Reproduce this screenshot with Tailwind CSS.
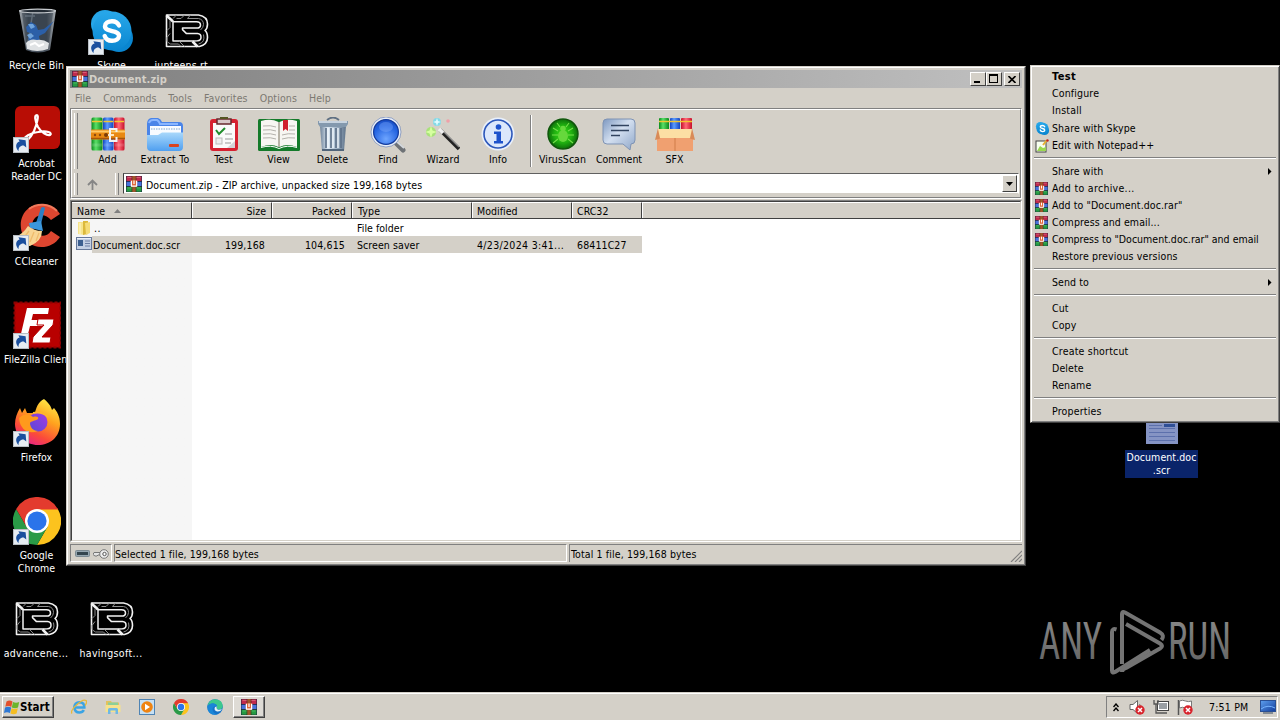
<!DOCTYPE html>
<html lang="en">
<head>
<meta charset="utf-8">
<title>Desktop</title>
<script src="https://cdn.jsdelivr.net/npm/@tailwindcss/browser@4"></script>
</head>
<body class="w-[1280px] h-[720px] overflow-hidden bg-black">
<!-- Shared icon symbols -->
<svg class="absolute size-0" aria-hidden="true">
  <defs>
    <linearGradient id="gGlass" x1="0" x2="1" y1="0" y2="0"><stop offset="0" stop-color="#a2a8ad"/><stop offset=".25" stop-color="#4a5460"/><stop offset=".75" stop-color="#49525d"/><stop offset="1" stop-color="#aab0b5"/></linearGradient>
    <linearGradient id="gSky" x1="0" x2="0" y1="0" y2="1"><stop offset="0" stop-color="#28a8ea"/><stop offset="1" stop-color="#0a86d0"/></linearGradient>
    <linearGradient id="gFolder" x1="0" x2="0" y1="0" y2="1"><stop offset="0" stop-color="#a9d8fb"/><stop offset="1" stop-color="#4f9ff0"/></linearGradient>
    <linearGradient id="gFf" x1=".8" x2=".3" y1="0" y2="1"><stop offset="0" stop-color="#fff04a"/><stop offset=".4" stop-color="#ffa21e"/><stop offset=".75" stop-color="#fb4a3a"/><stop offset="1" stop-color="#e6228a"/></linearGradient>
    <linearGradient id="gFfp" x1="1" x2="0" y1="0" y2="1"><stop offset="0" stop-color="#a43be0"/><stop offset="1" stop-color="#5548d8"/></linearGradient>
    <linearGradient id="gCan" x1="0" x2="1" y1="0" y2="0"><stop offset="0" stop-color="#6d8299"/><stop offset=".3" stop-color="#dfeaf4"/><stop offset=".6" stop-color="#a9bbcd"/><stop offset="1" stop-color="#5f748b"/></linearGradient>
    <radialGradient id="gLens" cx=".5" cy=".75" r=".8"><stop offset="0" stop-color="#6ea5ff"/><stop offset=".6" stop-color="#2363e0"/><stop offset="1" stop-color="#1746b8"/></radialGradient>
    <radialGradient id="gVirus"><stop offset="0" stop-color="#3fe01c"/><stop offset=".6" stop-color="#1fae10"/><stop offset="1" stop-color="#0d6f0a"/></radialGradient>
    <linearGradient id="gBub" x1="0" x2="1" y1="0" y2="1"><stop offset="0" stop-color="#7d98c0"/><stop offset=".45" stop-color="#d3dff0"/><stop offset="1" stop-color="#8ea6c8"/></linearGradient>
    <linearGradient id="gAny" gradientUnits="userSpaceOnUse" x1="0" x2="0" y1="14" y2="55"><stop offset="0" stop-color="#868686"/><stop offset="1" stop-color="#666666"/></linearGradient>
    <linearGradient id="gMon" x1="0" x2="1" y1="0" y2="1"><stop offset="0" stop-color="#5ea0f0"/><stop offset="1" stop-color="#123c9a"/></linearGradient>
    <linearGradient id="gBg" x1="0" x2="1" y1="0" y2="0"><stop offset="0" stop-color="#0a8a1c"/><stop offset=".4" stop-color="#5be068"/><stop offset="1" stop-color="#0a8a1c"/></linearGradient>
    <linearGradient id="gBb" x1="0" x2="1" y1="0" y2="0"><stop offset="0" stop-color="#1445c0"/><stop offset=".4" stop-color="#5c9cff"/><stop offset="1" stop-color="#1445c0"/></linearGradient>
    <linearGradient id="gBr" x1="0" x2="1" y1="0" y2="0"><stop offset="0" stop-color="#c80f2a"/><stop offset=".45" stop-color="#ff6a78"/><stop offset="1" stop-color="#c80f2a"/></linearGradient>

    <symbol id="shortcut" viewBox="0 0 16 16"><rect x=".5" y=".5" width="15" height="15" fill="#e6ecf2" stroke="#b8bec4"/><path d="M5.500 14.200C2.200 10.800 2.300 5.800 6.600 4.600L5.400 2.200 12.600 3.200 13.300 10.600 10.700 8.600C7.600 8.300 5.400 10.600 5.500 14.200Z" fill="#1a4f9e"/></symbol>

    <symbol id="rar" viewBox="0 0 16 16"><rect width="16" height="16" fill="#1c2440"/><rect x=".5" y=".3" width="15" height="4.700" fill="#c02a4c"/><rect x=".5" y="5.800" width="15" height="4.200" fill="#4872dc"/><rect x=".5" y="10.800" width="15" height="4.900" fill="#259a42"/><path d="M1.500 1.500h13" stroke="#e06a80" stroke-width=".8"/><path d="M1.500 12h13" stroke="#52c06a" stroke-width=".8"/><rect x="6.200" y="0" width="3.600" height="16" fill="#a0562a"/><path d="M5.900 0v16M10.100 0v16" stroke="#3d2210" stroke-width=".5"/><rect x="4.800" y="4.300" width="6.400" height="6.400" rx="1" fill="#e0683a"/><path d="M5.400 4.800v5.400h5.200V4.800M8 4.500v3.500" stroke="#fff" stroke-width="1.200" fill="none"/></symbol>

    <symbol id="books" viewBox="0 0 34 34">
      <rect x=".5" y=".5" width="11" height="33" rx="1.5" fill="url(#gBg)"/><rect x="12" y=".5" width="10.500" height="33" rx="1.500" fill="url(#gBb)"/><rect x="23" y=".5" width="10.500" height="33" rx="1.500" fill="url(#gBr)"/>
      <path d="M1 4.500h10M12.500 4.500h9.500M23.500 4.500h9.500" stroke="#f2c530" stroke-width="1.600"/><path d="M1 28h10M12.500 28h9.500M23.500 28h9.500" stroke="#fff" stroke-opacity=".15" stroke-width="3"/>
      <rect x="0" y="12.500" width="34" height="10" rx="1" fill="#e88912"/><path d="M0 14.500h34" stroke="#ffc964" stroke-width="2"/><path d="M0 21.500h34" stroke="#a9560a" stroke-width="1.500"/>
      <circle cx="15" cy="18" r="2" fill="#7a3b08"/><circle cx="4" cy="18" r="1.200" fill="#8a4a10"/><circle cx="9" cy="18" r="1.200" fill="#8a4a10"/><path d="M25.500 15v-3H19v12h6.500v-4" fill="none" stroke="#f3f3f3" stroke-width="2"/><path d="M17 18h6" stroke="#fff0d0" stroke-width="1.800"/>
    </symbol>

    <symbol id="skype" viewBox="0 0 48 48"><circle cx="17" cy="17" r="14" fill="#27a6e8"/><circle cx="31" cy="31" r="14" fill="#0a86d0"/><circle cx="24" cy="24" r="19.500" fill="url(#gSky)"/><path d="M31 18.500C29.500 14.800 26.800 14.200 24 14.200c-4 0-7 2-7 5 0 6.500 14 3.300 14 9.600 0 3-3 5-7 5-3.600 0-6.200-1.600-7.300-4.800" fill="none" stroke="#fff" stroke-width="4.400" stroke-linecap="round"/></symbol>

    <symbol id="chrome" viewBox="0 0 48 48"><path d="M24 24 3.200 12A24 24 0 0 1 44.800 12Z" fill="#e33b2e"/><path d="M24 12H44.800A24 24 0 0 1 24 48l10.400-18Z" fill="#fcc31e"/><path d="M3.200 12A24 24 0 0 0 24 48L34.400 30 24 24 13.600 30Z" fill="#2a9a47"/><path d="M3.200 12 13.600 30 24 12Z" fill="#e33b2e"/><path d="M24 12h21" stroke="#e33b2e" stroke-width="1"/><circle cx="24" cy="24" r="12" fill="#fff"/><circle cx="24" cy="24" r="9.600" fill="#2b74ea"/></symbol>

    <symbol id="blogo" viewBox="0 0 48 48"><g transform="translate(-.5 .5)" fill="none" stroke="#f2f2f2" stroke-linejoin="round"><path d="M4 7.500H36q9 1.500 9 9 0 4.500-2.500 6.500 2.500 2 2.500 7 0 7-8 9H4Z" stroke-width="1.600"/><path d="M4 8 10.500 14M30 34l5 5" stroke-width="2.600"/><path d="M31 33.500H10.500V14.200H34q4 0 4 3.200t-4 3.200H20v1.500l4 4H35q3.500 .3 3.500 3.600t-3.500 3.600Z" stroke-width="1.500"/><path d="M14 7.500 10.500 11M22 7.500l-3.500 3.500H14M28 7.500l-3 3.500h11q5 1 5 6 0 3-3 5.500M7.500 13v7l-3 3M7.500 26l-3 4v4M5 34.500l3 2h8l2.500 2.500M17 34l5 5M41 27q2 8-5 9.500" stroke-width="1" stroke="#8c8c8c"/></g></symbol>

    <symbol id="arrow" viewBox="0 0 4 7"><path d="M0 0v7l3.500-3.500z" fill="#000"/></symbol>
    <symbol id="badx" viewBox="0 0 10 10"><circle cx="5" cy="5" r="4.700" fill="#d8242c"/><path d="m3 3 4 4M7 3 3 7" stroke="#fff" stroke-width="1.500"/></symbol>
  </defs>
</svg>

<div class="relative w-[1280px] h-[720px] flex flex-col font-['DejaVu_Sans_Condensed','DejaVu_Sans',sans-serif] [font-stretch:condensed] text-[10.5px] tracking-[0.04px] leading-[13px] text-black whitespace-nowrap">
  <!-- Desktop surface -->
  <main class="relative h-[692px] w-full overflow-hidden bg-black text-white">

    <div class="absolute left-[-1px] top-[7px] w-[75px] flex flex-col items-center text-center">
      <svg class="size-12" viewBox="0 0 48 48"><path d="M6 3h37l-6 40q-12 5-24 0Z" fill="url(#gGlass)"/><path d="M9 6h31l-5 36q-11 4-21 0Z" fill="#28323f" opacity=".45"/><path d="M20 4l-6 38M12 9l10 0" stroke="#7b8793" stroke-width="1.500" opacity=".6"/><path d="m13 20 5-5 5 3 2 5 6-1 10-8-9 12-6 3 1 6-7-1-3 3-2-6 5-4-6-2Z" fill="#2b5fa8"/><path d="m15 17 5 0 2 3-4 2zM14 28l4-2 3 3-4 3Z" fill="#6fa4dc"/><path d="M13 36q4-5 11-3 6-1 12 3l-1 6q-11 4-21 0Z" fill="#dfe2e4"/><path d="m17 38 5-2 4 3 5-2" stroke="#fff" fill="none" stroke-width="2"/><ellipse cx="24.500" cy="4" rx="18" ry="1.800" fill="#222a33" stroke="#c6cace" stroke-width="1.200"/></svg>
      <span class="mt-[4px]">Recycle Bin</span>
    </div>

    <div class="absolute left-[74px] top-[7px] w-[75px] flex flex-col items-center text-center">
      <div class="relative size-12"><svg class="size-12"><use href="#skype"/></svg><svg class="absolute left-0 bottom-0 size-4"><use href="#shortcut"/></svg></div>
      <span class="mt-[4px]">Skype</span>
    </div>

    <div class="absolute left-[149px] top-[7px] w-[75px] flex flex-col items-center text-center">
      <svg class="size-12"><use href="#blogo"/></svg>
      <span class="mt-[4px] -ml-px tracking-[0.2px]">junteens.rt...</span>
    </div>

    <div class="absolute left-[-1px] top-[105px] w-[75px] flex flex-col items-center text-center">
      <div class="relative size-12"><svg class="size-12" viewBox="0 0 48 48"><rect x="2" y="1" width="45" height="43" rx="6" fill="#b80d05"/><path d="M24 10c-3 0-2 6 1 12 3 5 9 9 12 8 3-2-3-5-12-3-8 1-14 5-14 8 1 3 6-1 10-9 3-7 5-16 3-16Z" fill="none" stroke="#fff" stroke-width="2.200"/></svg><svg class="absolute left-0 bottom-0 size-4"><use href="#shortcut"/></svg></div>
      <span class="mt-[4px]">Acrobat<br>Reader DC</span>
    </div>

    <div class="absolute left-[-1px] top-[203px] w-[75px] flex flex-col items-center text-center">
      <div class="relative size-12"><svg class="size-12" viewBox="0 0 48 48"><path d="M47 11C41 1 26-2 16 5 4 14 6 32 16 40c9 7 24 5 31-6l-9-6c-4 6-11 6-15 2-5-5-5-12 0-16 5-3 11-2 15 3Z" fill="#dd4630"/><path d="M44 8C36 0 24 0 16 6" stroke="#f07a5c" stroke-width="2" fill="none"/><path d="M28 5q2-2 4 0l-4 16-5-1Z" fill="#2b7fc4"/><path d="m16 20 12-2 2 10-13-3Z" fill="#3b97dc"/><path d="M15 23q6 5 14 5 0 10-12 15Q6 44 2 34q8-3 13-11Z" fill="#f8d593"/><path d="m16 28-6 8m11-7-4 10m9-9-3 8" stroke="#eebb6c" stroke-width="1.300"/></svg><svg class="absolute left-0 bottom-0 size-4"><use href="#shortcut"/></svg></div>
      <span class="mt-[4px]">CCleaner</span>
    </div>

    <div class="absolute left-[-1px] top-[301px] w-[75px] flex flex-col items-center text-center">
      <div class="relative size-12"><svg class="size-12" viewBox="0 0 48 48"><rect x="1.500" y="1.500" width="46" height="45" fill="#b80000" stroke="#8d0202" stroke-width="2" stroke-dasharray="3 2"/><path d="M14 7h22l-1 6H20l-1.500 6H31l-1.500 6H17l-3 12H7Z" fill="#fff"/><path d="M25 18h16l-1 6-11 12h9l-1 6H19l1-6 11-12h-7Z" fill="#fff" stroke="#b80000" stroke-width="1"/></svg><svg class="absolute left-0 bottom-0 size-4"><use href="#shortcut"/></svg></div>
      <span class="mt-[4px] ml-[2px]">FileZilla Client</span>
    </div>

    <div class="absolute left-[-1px] top-[399px] w-[75px] flex flex-col items-center text-center">
      <div class="relative size-12"><svg class="size-12" viewBox="0 0 48 48"><path d="M31 0c6 5 7 8 8 11l2-2c5 6 6 11 6 16 0 13-10 21-22 21S2 37 2 25c0-6 2-11 5-16l2 5 3-5 2 5 8 0c1-5 3-11 9-14Z" fill="url(#gFf)"/><circle cx="25" cy="23" r="9.500" fill="url(#gFfp)"/><path d="M6 19c5-5 11-4 14-1 4-1 6 0 5 2-3 2-7 2-8 4 0 5 4 8 8 8-9 4-18-1-19-13Z" fill="#ff9a1c"/><path d="M20 14q9-2 15 4" fill="none" stroke="#ffb52c" stroke-width="2"/></svg><svg class="absolute left-0 bottom-0 size-4"><use href="#shortcut"/></svg></div>
      <span class="mt-[4px]">Firefox</span>
    </div>

    <div class="absolute left-[-1px] top-[497px] w-[75px] flex flex-col items-center text-center">
      <div class="relative size-12"><svg class="size-12"><use href="#chrome"/></svg><svg class="absolute left-0 bottom-0 size-4"><use href="#shortcut"/></svg></div>
      <span class="mt-[4px]">Google<br>Chrome</span>
    </div>

    <div class="absolute left-[-1px] top-[595px] w-[75px] flex flex-col items-center text-center">
      <svg class="size-12"><use href="#blogo"/></svg>
      <span class="mt-[4px] -ml-px tracking-[0.3px]">advancene...</span>
    </div>
    <div class="absolute left-[74px] top-[595px] w-[75px] flex flex-col items-center text-center">
      <svg class="size-12"><use href="#blogo"/></svg>
      <span class="mt-[4px] -ml-px tracking-[0.35px]">havingsoft...</span>
    </div>

    <!-- Selected desktop file -->
    <div class="absolute left-[1125px] top-[408px] w-[73px] flex flex-col items-center text-center">
      <svg class="w-8 h-9" viewBox="0 0 32 36"><rect width="32" height="36" fill="#8594c4"/><rect x="18" y="16" width="11" height="3" fill="#2f4f96"/><path d="M3 17.500h13M3 20.500h26M3 24.500h26M3 28.500h26M3 32.500h26" stroke="#5c70ac"/></svg>
      <span class="mt-[6px] w-full h-7 pt-px bg-[#0a246a] tracking-[0.08px]">Document.doc<br>.scr</span>
    </div>

    <!-- Watermark -->
    <svg class="absolute left-[1036px] top-[606px] w-[200px] h-[70px]" viewBox="0 0 200 70">
      <g fill="url(#gAny)" font-family="Roboto, sans-serif" font-size="52" font-weight="400"><text x="3" y="53" textLength="63" lengthAdjust="spacingAndGlyphs">ANY</text><text x="132" y="53" textLength="63" lengthAdjust="spacingAndGlyphs">RUN</text></g>
      <g fill="none" stroke="#747474" stroke-width="4" stroke-linejoin="round" stroke-linecap="butt"><path d="M80.500 23.500q-4.500-1.500-4.500 2.500v38.500q0 3 3 1.500l35-22"/><path d="M86 58V8q0-3 3-1.500l35 20q5 3 1.500 7.500"/><path d="M90 18l34 19.500q4 2.500 0 5L90 62q-4 1.500-4 4"/></g>
    </svg>

    <!-- Archive window -->
    <section class="absolute left-[66px] top-[66px] w-[960px] h-[500px] flex flex-col bg-[#d4d0c8] text-black border border-t-[#d4d0c8] border-l-[#d4d0c8] border-r-[#404040] border-b-[#404040]">
      <div class="flex flex-col h-full border border-t-white border-l-white border-r-[#808080] border-b-[#808080] p-[2px]">
        <header class="flex items-center h-[18px] shrink-0 pl-[2px] pr-[2px] bg-linear-to-r from-[#808080] to-[#c0c0c0] text-[#d4d0c8] font-bold text-[11px]">
          <svg class="size-4 shrink-0"><use href="#rar"/></svg>
          <span class="ml-[1px] grow tracking-[0.1px]">Document.zip</span>
          <div class="flex">
            <span class="w-4 h-[14px] bg-[#d4d0c8] border border-t-white border-l-white border-r-[#404040] border-b-[#404040] flex items-end pl-[3px] pb-[2px]"><i class="w-[6px] h-[2px] bg-black"></i></span>
            <span class="w-4 h-[14px] bg-[#d4d0c8] border border-t-white border-l-white border-r-[#404040] border-b-[#404040] pl-[2px] pt-px"><i class="block w-[9px] h-[9px] border border-t-2 border-black"></i></span>
            <span class="ml-[2px] w-4 h-[14px] bg-[#d4d0c8] border border-t-white border-l-white border-r-[#404040] border-b-[#404040] flex items-center justify-center"><svg class="w-2 h-[7px]" viewBox="0 0 8 7"><path d="m.5 0 7 7M7.500 0l-7 7" stroke="#000" stroke-width="1.600"/></svg></span>
          </div>
        </header>
        <nav class="flex items-center h-[20px] shrink-0 text-[#7c7972] pl-[5px] pt-px gap-[12px] tracking-[0.12px]">
          <span>File</span><span class="tracking-[-0.05px]">Commands</span><span>Tools</span><span>Favorites</span><span>Options</span><span>Help</span>
        </nav>

        <!-- Toolbars -->
        <div class="h-[91px] shrink-0 border border-t-[#808080] border-l-[#808080] border-r-white border-b-white">
          <div class="h-full border border-t-white border-l-white border-r-[#808080] border-b-[#808080] flex flex-col">
            <div class="flex h-[61px] shrink-0 pl-[2px] pt-px">
              <i class="w-[4px] mr-[2px] my-[2px] border-l border-l-white border-r border-r-[#808080]"></i>
              <div class="w-[55px] flex flex-col items-center pt-[6px]"><svg class="size-[34px] ml-px"><use href="#books"/></svg><span class="mt-[2px]">Add</span></div>
              <div class="w-[60px] flex flex-col items-center pt-[6px]">
                <svg class="w-[38px] h-[34px]" viewBox="0 0 38 34"><path d="M1 7q0-5 4-6h7q3 1 4 4h17q4 0 4 4v20H1Z" fill="#4a84e8"/><path d="M3 6q1-3 4-3h4q2 1 3 4h18" fill="none" stroke="#8ab6ff" stroke-width="2"/><rect x="4" y="9" width="31" height="12" fill="#f8fbff"/><path d="M5 12h29" stroke="#bcd0e8" stroke-width="2" stroke-dasharray="1.500 1"/><path d="M1 18h11l4-2.500h21V30q0 4-4 4H5q-4 0-4-4Z" fill="url(#gFolder)"/><rect x="23" y="27" width="10" height="3" rx="1" fill="#d9431e"/></svg>
                <span class="mt-[2px] tracking-[0.25px]">Extract To</span></div>
              <div class="w-[56px] flex flex-col items-center pt-[6px] pl-px">
                <svg class="w-[30px] h-[34px]" viewBox="0 0 30 34"><rect x="1" y="2" width="28" height="32" rx="3" fill="#d62131"/><rect x="4" y="6" width="22" height="25" fill="#fafafa"/><path d="M26 24v7h-8Z" fill="#d4d4d8"/><path d="M8 2h14v5H8Z" fill="#d8c8c8" stroke="#67282c" stroke-width="1.500"/><path d="M11 1h8" stroke="#552" stroke-width="2"/><path d="m7 13 3 4 6-6" stroke="#1f8c2b" stroke-width="2" fill="none"/><rect x="7" y="21" width="6" height="6" fill="#eee" stroke="#bbb"/><path d="M16 17h7M16 22h8M16 26h6" stroke="#999"/></svg>
                <span class="mt-[2px]">Test</span></div>
              <div class="w-[54px] flex flex-col items-center pt-[6px] pl-px">
                <svg class="w-[42px] h-[34px]" viewBox="0 0 42 34"><rect x="0" y="2" width="42" height="32" rx="1.500" fill="#147a2a"/><path d="M3 4q10-3 17.500 1V30Q13 26 3 30ZM39 4q-10-3-17.500 1V30Q29 26 39 30Z" fill="#f7f6f2"/><path d="M3 30.500q10-3 18 1 8-4 18-1" stroke="#fff" fill="none"/><path d="M20.500 5v25M21.500 5v25" stroke="#b8b4a8"/><path d="M5 9q8-1 13 1M5 13q8-1 13 1M5 17q8-1 13 1M5 21q8-1 13 1M24 18q6-2 13-1M24 22q6-2 13-1M31 9h6M31 13h6" stroke="#b4b2ac" fill="none"/><path d="M25 3h5v11l-2.500-2-2.500 2Z" fill="#d01f2c"/></svg>
                <span class="mt-[2px]">View</span></div>
              <div class="w-[55px] flex flex-col items-center pt-[6px]">
                <svg class="w-[32px] h-[34px] ml-px" viewBox="0 0 32 34"><path d="M10 3q6-5 12 0" fill="none" stroke="#5f7083" stroke-width="1.800"/><path d="M3 9h26l-2 25H5Z" fill="url(#gCan)"/><path d="M9 11v20M14 11v20M19 11v20M24 11v20" stroke="#5d7088" stroke-width="1.600"/><path d="M11 11v20M16 11v20M21 11v20" stroke="#eef5fb" stroke-width="1.400"/><path d="M1 4h30v3l-2 3H3L1 7Z" fill="#8499ae"/><path d="M2 5h28" stroke="#dfe8f0" stroke-width="1.500"/><path d="M5 33h22" stroke="#50647a" stroke-width="2"/></svg>
                <span class="mt-[2px]">Delete</span></div>
              <div class="w-[55px] flex flex-col items-center pt-[6px]">
                <svg class="w-[36px] h-[36px] -mb-[2px]" viewBox="0 0 36 36"><path d="m24 24 9 9" stroke="#6e7276" stroke-width="5" stroke-linecap="round"/><path d="m25 23 9 8" stroke="#d4d8dc" stroke-width="1.800"/><circle cx="16" cy="15" r="13.700" fill="url(#gLens)" stroke="#e9eef6" stroke-width="2.400"/><circle cx="16" cy="15" r="12.400" fill="none" stroke="#123a9c" stroke-width="1.200"/><circle cx="16" cy="15" r="15" fill="none" stroke="#5a76b0" stroke-width=".6"/><ellipse cx="16" cy="10" rx="7" ry="5" fill="#8cb4ff" opacity=".35"/></svg>
                <span class="mt-[2px] ml-px">Find</span></div>
              <div class="w-[55px] flex flex-col items-center pt-[6px]">
                <svg class="w-[34px] h-[34px] ml-px" viewBox="0 0 34 34"><circle cx="5" cy="15" r="5" fill="#9be860" opacity=".75"/><path d="M5 9l1.500 4.500L11 15l-4.500 1.500L5 21l-1.500-4.500L-1 15l4.500-1.500Z" fill="#d6ffa0"/><circle cx="11" cy="5" r="4" fill="#6edcf0" opacity=".8"/><path d="m11 1 1 3 3 1-3 1-1 3-1-3-3-1 3-1Z" fill="#e0fbff"/><circle cx="22" cy="4" r="1.800" fill="#f0a0a8"/><path d="m14 13 19 19" stroke="#222" stroke-width="3.600"/><path d="m15 12 18 18" stroke="#8d8d8d" stroke-width="1.200"/><path d="m13 12 4 4" stroke="#eee" stroke-width="3.600"/></svg>
                <span class="mt-[2px] tracking-[0.15px] ml-px">Wizard</span></div>
              <div class="w-[55px] flex flex-col items-center pt-[6px]">
                <svg class="size-[34px]" viewBox="0 0 34 34"><circle cx="17" cy="17" r="16.500" fill="#e9f0fb"/><circle cx="17" cy="17" r="14" fill="#dbe7fb" stroke="#2b56ba" stroke-width="1.600"/><circle cx="17.500" cy="10" r="2.800" fill="#1d52cc"/><path d="M13 14.500h7V24h2v2.500h-9V24h2.500v-7H13Z" fill="#1d52cc"/></svg>
                <span class="mt-[2px] ml-px">Info</span></div>
              <div class="w-[10px] flex justify-center py-[4px] pl-px"><i class="w-[2px] bg-[#808080] border-r border-r-white"></i></div>
              <div class="w-[55px] flex flex-col items-center pt-[6px]">
                <svg class="size-[34px]" viewBox="0 0 34 34"><circle cx="17" cy="17" r="16" fill="#e4ece0"/><circle cx="17" cy="17" r="15" fill="url(#gVirus)" stroke="#12540c" stroke-width="1.500"/><g stroke="#74e04a" stroke-width="1.100" fill="none"><path d="m12 14-5-3M12 18H6M12 22l-5 4M22 14l5-3M22 18h6M22 22l5 4M14 10l-3-4M20 10l3-4"/></g><ellipse cx="17" cy="19" rx="5" ry="6" fill="#66d83c"/><circle cx="17" cy="11.500" r="2.800" fill="#66d83c"/></svg>
                <span class="mt-[2px]">VirusScan</span></div>
              <div class="w-[57px] flex flex-col items-center pt-[6px] pl-px">
                <svg class="w-[34px] h-[34px]" viewBox="0 0 34 34"><path d="M5 2h24q4 0 4 4v17q0 4-4 4l-1 6-7-6H5q-4 0-4-4V6q0-4 4-4Z" fill="url(#gBub)" stroke="#7f93b4" stroke-width="1"/><path d="M9 8.500h18M9 13.500h18M9 18.500h9" stroke="#31435f" stroke-width="1.400"/></svg>
                <span class="mt-[2px] tracking-[-0.05px]">Comment</span></div>
              <div class="w-[55px] flex flex-col items-center pt-[6px]">
                <svg class="w-[40px] h-[34px]" viewBox="0 0 40 34"><rect x="4" y="1" width="10" height="13" rx="1" fill="url(#gBg)"/><rect x="15" y="1" width="10" height="13" rx="1" fill="url(#gBb)"/><rect x="26" y="1" width="11" height="13" rx="1" fill="url(#gBr)"/><path d="M4 4.500h33" stroke="#f2c530" stroke-width="1.600"/><path d="M2 17h36v17H2Z" fill="#f0a070"/><path d="M20 17v17" stroke="#d07c48"/><path d="m3 11-3 12 4-1 3-2Zm34 0 3 12-4-1-3-2Z" fill="#d98a58"/><path d="M3 12h34l-2 9H5Z" fill="#fcdfa4"/></svg>
                <span class="mt-[2px]">SFX</span></div>
            </div>
            <div class="flex h-[24px] shrink-0 pl-[2px] pt-[2px] pr-px">
              <i class="w-[4px] shrink-0 border-l border-l-white border-r border-r-[#808080]"></i>
              <div class="w-[37px] shrink-0 flex items-center pl-[9px]"><svg class="w-[11px] h-[11px]" viewBox="0 0 11 11"><path d="M5.500 11V2M1 6l4.500-4.500L10 6" fill="none" stroke="#858585" stroke-width="1.800"/></svg></div>
              <i class="w-[4px] shrink-0 mr-[4px] border-l border-l-white border-r border-r-[#808080]"></i>
              <div class="grow h-[21px] flex items-center bg-white border border-t-[#606060] border-l-[#404040] border-r-white border-b-[#d4d0c8] pl-[2px] pr-px">
                <svg class="size-4 shrink-0"><use href="#rar"/></svg>
                <span class="grow pl-[4px] pt-[3px] tracking-[0.08px]">Document.zip - ZIP archive, unpacked size 199,168 bytes</span>
                <span class="w-[15px] h-[17px] bg-[#d4d0c8] border border-t-white border-l-white border-r-[#404040] border-b-[#404040] flex items-center justify-center"><svg class="w-[7px] h-1" viewBox="0 0 7 4"><path d="M0 0h7L3.500 4z"/></svg></span>
              </div>
            </div>
          </div>
        </div>

        <!-- File list -->
        <div class="mt-px grow flex flex-col border border-t-[#808080] border-l-[#808080] border-r-white border-b-white">
          <div class="grow flex flex-col bg-white border border-t-[#404040] border-l-[#404040] border-r-[#d4d0c8] border-b-[#d4d0c8]">
            <div class="flex h-[17px] shrink-0 bg-[#d4d0c8] border-b border-b-[#404040] leading-[17px]">
              <span class="w-[120px] pl-[5px] pt-px border-t border-t-white border-r border-r-[#404040] flex items-center tracking-[0.1px]">Name<svg class="ml-[9px] w-[7px] h-1" viewBox="0 0 7 4"><path d="M0 4h7L3.500 0z" fill="#808080"/></svg></span>
              <span class="w-[80px] pr-[5px] text-right border-t border-l border-t-white border-l-white border-r border-r-[#404040]">Size</span>
              <span class="w-[80px] pr-[5px] text-right border-t border-l border-t-white border-l-white border-r border-r-[#404040] tracking-[0.15px]">Packed</span>
              <span class="w-[120px] pl-[5px] border-t border-l border-t-white border-l-white border-r border-r-[#404040] tracking-[0.2px]">Type</span>
              <span class="w-[100px] pl-[4px] border-t border-l border-t-white border-l-white border-r border-r-[#404040]">Modified</span>
              <span class="w-[70px] pl-[4px] border-t border-l border-t-white border-l-white border-r border-r-[#404040]">CRC32</span>
              <span class="grow border-t border-l border-t-white border-l-white"></span>
            </div>
            <div class="grow bg-linear-to-r from-[#f6f6f6] from-[120px] to-white to-[120px]">
              <div class="flex h-[17px] items-center">
                <span class="w-[285px] pl-[4px] flex items-center"><svg class="size-4" viewBox="0 0 16 16"><path d="M2 2h5l1 13-6-1Z" fill="#f7e48c"/><path d="M7 1h5v13l-5 1Z" fill="#dcb93c"/><path d="m9 3 5-1v11l-4 2Z" fill="#f5dc78"/><path d="M4 3v11" stroke="#fff8cc"/></svg><span class="pl-[2px] pt-[2px] tracking-[0.5px]">..</span></span>
                <span class="pt-[2px]">File folder</span>
              </div>
              <div class="flex h-[17px] items-center">
                <span class="w-5 h-full pl-[4px]"><svg class="size-4" viewBox="0 0 16 16"><rect x=".5" y="1.500" width="15" height="12" fill="#c3cfe4" stroke="#66789a"/><rect x="2" y="4" width="5" height="6" fill="#3c5f90"/><path d="M9 5h5M9 7.500h5M9 10h5" stroke="#6d7fa5"/><path d="M1 2.500h14" stroke="#eaf0fa"/></svg></span>
                <span class="flex h-full items-center w-[550px] bg-[#d4d0c8] pt-[2px]">
                  <span class="w-[100px] pl-px tracking-[0.08px]">Document.doc.scr</span>
                  <span class="w-[73px] text-right tracking-[0.15px]">199,168</span>
                  <span class="w-[80px] text-right tracking-[0.15px]">104,615</span>
                  <span class="w-[120px] pl-[12px] tracking-[0.08px]">Screen saver</span>
                  <span class="w-[100px] pl-[12px] tracking-[0.32px]">4/23/2024 3:41...</span>
                  <span class="pl-[12px] tracking-[0.12px]">68411C27</span>
                </span>
              </div>
            </div>
          </div>
        </div>

        <!-- Status bar -->
        <footer class="mt-[2px] h-[18px] shrink-0 flex gap-[2px] tracking-[0.08px]">
          <span class="w-[42px] flex items-center gap-[3px] pl-[4px] pt-px border border-t-[#808080] border-l-[#808080] border-r-white border-b-white">
            <svg class="w-[15px] h-[7px]" viewBox="0 0 15 7"><rect x=".5" y=".5" width="14" height="6" rx="1" fill="#95a6b0" stroke="#7c8a92"/><rect x="2" y="2" width="11" height="3" fill="#34454e"/></svg>
            <svg class="w-[16px] h-[10px]" viewBox="0 0 16 10"><path d="M9 3.500H1L0 5.500l2 1.500h2l1-1h4" fill="#e4e4e4" stroke="#777"/><circle cx="11" cy="5" r="4.300" fill="#eee" stroke="#777"/><circle cx="11.500" cy="5" r="1.700" fill="#fff" stroke="#555"/></svg>
          </span>
          <span class="w-[453px] flex items-center border border-t-[#808080] border-l-[#808080] border-r-white border-b-white pt-[2px]">Selected 1 file, 199,168 bytes</span>
          <span class="grow flex items-center justify-between border-t border-l border-t-[#808080] border-l-[#808080] pt-px pl-px tracking-[0.12px]">Total 1 file, 199,168 bytes<svg class="self-end w-3 h-3" viewBox="0 0 12 12"><path d="M12 1 1 12M12 5l-7 7M12 9l-3 3" stroke="#808080" stroke-width="1.200"/></svg></span>
        </footer>
      </div>
    </section>

    <!-- Context menu -->
    <ul class="absolute left-[1030px] top-[65px] w-[250px] h-[358px] bg-[#d4d0c8] text-black border border-t-[#d4d0c8] border-l-[#d4d0c8] border-r-[#404040] border-b-[#404040] shadow-[inset_1px_1px_0_#fff,inset_-1px_-1px_0_#808080] px-[3px] pt-[2px] leading-[17px] tracking-[0.1px]">
      <li class="h-[17px] pl-[18px] font-bold text-[11px] tracking-[0.4px]">Test</li>
      <li class="h-[17px] pl-[18px] tracking-[0.15px]">Configure</li>
      <li class="h-[17px] pl-[18px] tracking-[0.2px]">Install</li>
      <li class="h-[18px] flex items-center"><svg class="size-[15px] ml-px mr-[2px]"><use href="#skype"/></svg><span class="tracking-[0.12px]">Share with Skype</span></li>
      <li class="h-[17px] flex items-center"><svg class="size-[14px] ml-px mr-[3px]" viewBox="0 0 14 14"><rect x="1" y="2" width="10" height="11" fill="#f8fff0" stroke="#444"/><path d="m2 12 3-5 3 2 3-1v4Z" fill="#9ad850"/><path d="M8 6l4-5" stroke="#e8b030" stroke-width="2"/><circle cx="12.500" cy="1.500" r="1.200" fill="#c02020"/></svg>Edit with Notepad++</li>
      <li class="h-[9px] pt-[3px]"><div class="h-[2px] bg-[#808080] border-b border-b-white"></div></li>
      <li class="h-[17px] pl-[18px] pr-[4px] flex items-center justify-between">Share with<svg class="w-[4px] h-[7px]"><use href="#arrow"/></svg></li>
      <li class="h-[17px] flex items-center"><svg class="size-[13px] ml-px mr-[4px]"><use href="#rar"/></svg><span class="tracking-[0.3px]">Add to archive...</span></li>
      <li class="h-[17px] flex items-center"><svg class="size-[13px] ml-px mr-[4px]"><use href="#rar"/></svg>Add to "Document.doc.rar"</li>
      <li class="h-[17px] flex items-center"><svg class="size-[13px] ml-px mr-[4px]"><use href="#rar"/></svg>Compress and email...</li>
      <li class="h-[17px] flex items-center"><svg class="size-[13px] ml-px mr-[4px]"><use href="#rar"/></svg><span class="tracking-[0.01px]">Compress to "Document.doc.rar" and email</span></li>
      <li class="h-[17px] pl-[18px] tracking-[0.16px]">Restore previous versions</li>
      <li class="h-[9px] pt-[3px]"><div class="h-[2px] bg-[#808080] border-b border-b-white"></div></li>
      <li class="h-[17px] pl-[18px] pr-[4px] flex items-center justify-between">Send to<svg class="w-[4px] h-[7px]"><use href="#arrow"/></svg></li>
      <li class="h-[9px] pt-[3px]"><div class="h-[2px] bg-[#808080] border-b border-b-white"></div></li>
      <li class="h-[17px] pl-[18px]">Cut</li>
      <li class="h-[17px] pl-[18px]">Copy</li>
      <li class="h-[9px] pt-[3px]"><div class="h-[2px] bg-[#808080] border-b border-b-white"></div></li>
      <li class="h-[17px] pl-[18px] tracking-[0.2px]">Create shortcut</li>
      <li class="h-[17px] pl-[18px]">Delete</li>
      <li class="h-[17px] pl-[18px]">Rename</li>
      <li class="h-[9px] pt-[3px]"><div class="h-[2px] bg-[#808080] border-b border-b-white"></div></li>
      <li class="h-[17px] pl-[18px] tracking-[0.2px]">Properties</li>
    </ul>
  </main>

  <!-- Taskbar -->
  <footer class="h-[28px] w-full flex bg-[#d4d0c8] border-t border-t-[#d4d0c8] shadow-[inset_0_1px_0_#fff] pt-[3px] pl-[2px] pr-[2px]">
    <div class="w-[52px] h-[22px] flex items-center pl-[1px] border border-t-white border-l-white border-r-[#404040] border-b-[#404040] shadow-[inset_-1px_-1px_0_#808080] font-bold text-[11.5px]">
      <svg class="w-4 h-4 shrink-0" viewBox="0 0 16 16"><path d="M2.500 2.500q3-2 6 0L7.300 8Q4.500 6.300 1.300 7.800Z" fill="#e2502c"/><path d="M9 3q3 1.500 6.200 0L14 8.500q-3 1.500-6.200 0Z" fill="#6cb52c"/><path d="M1 8.600q3-1.700 6.200 0L6 14q-3-1.700-6 0Z" fill="#2e78d4"/><path d="M7.600 9.300q3 1.500 6.200 0l-1.200 5.200q-3 1.500-6.200 0Z" fill="#f5bd22"/></svg>
      <span>Start</span>
    </div>
    <div class="flex items-center gap-[18px] pl-[17px] h-[22px]">
      <svg class="size-4" viewBox="0 0 16 16"><path d="M3.500 8.500h9.800Q13.500 3.500 8.500 3.300 3.600 3.600 3.300 8.600q.5 4.800 5.200 4.900 3 0 4.300-2.500" fill="none" stroke="#3ba4e4" stroke-width="2.600"/><path d="M1 14.500Q-1 12 5 6.500 12-.5 15 1.500q1.500 1.500-1 5" fill="none" stroke="#e8b93a" stroke-width="1.300"/></svg>
      <svg class="size-4" viewBox="0 0 16 16"><path d="M1 2h5l1 1.500h7V8H1Z" fill="#e3c25c"/><path d="M3 3.500h10V8H3Z" fill="#8bcf98"/><path d="M.5 6h15v7H.5Z" fill="#f6e28c"/><path d="M3 15v-4.500q0-1.500 1.500-1.500h7q1.500 0 1.500 1.500V15h-2.500v-3.500h-5V15Z" fill="#6fb8e4"/></svg>
      <svg class="size-4" viewBox="0 0 16 16"><rect x=".5" y=".5" width="15" height="15" fill="#c6e0f4" stroke="#4f84b4"/><circle cx="8" cy="8" r="5.800" fill="#ef8412"/><path d="M6 4.800v6.400L11 8z" fill="#fff"/></svg>
      <svg class="size-4"><use href="#chrome"/></svg>
      <svg class="size-4" viewBox="0 0 16 16"><circle cx="8" cy="8" r="7.800" fill="#1572c8"/><path d="M.5 7Q2 0 8.500.2 15.500 1 15.800 7 15.500 10.500 11.500 10.500q-2.500-.2-1.500-2 .5-3.500-3.500-4Q2 4.500.5 7Z" fill="#3cc88e"/><path d="M.5 7Q3 3.500 7 4.500q3 1 3 3-4-1-4.500 3 .5 4 5 5Q3 17 .8 11Z" fill="#1a86d8"/><path d="M9.800 7.500q-1 2.500 1.500 3.300 2 .2 3.700-.8-1.500 3-5 2.500-3.500-1-2-4.500Z" fill="#e6f2f6"/></svg>
    </div>
    <div class="ml-[10px] w-[32px] h-[22px] flex items-center justify-center bg-[#dedbd5] border border-t-white border-l-white border-r-[#404040] border-b-[#404040] shadow-[inset_-1px_-1px_0_#808080]"><svg class="size-4"><use href="#rar"/></svg></div>
    <div class="ml-auto w-[172px] h-[22px] flex items-center border border-t-[#808080] border-l-[#808080] border-r-white border-b-white pl-[6px]">
      <svg class="w-[6px] h-[9px]" viewBox="0 0 6 9"><path d="m.5 4 2.500-3 2.500 3M.5 8 3 5l2.500 3" fill="none" stroke="#000" stroke-width="1.400"/></svg>
      <svg class="ml-[10px] size-4" viewBox="0 0 16 16"><path d="M1 5.500h3l4.500-4v13L4 10.500H1Z" fill="#fff" stroke="#666"/><path d="M10.500 5q1.500 2 .5 4" fill="none" stroke="#777"/><use href="#badx" x="6" y="6" width="10" height="10"/></svg>
      <svg class="ml-[8px] size-4" viewBox="0 0 16 16"><rect x="4.500" y="2.500" width="11" height="9" fill="#fff" stroke="#444"/><rect x="6" y="4" width="8" height="6" fill="#9a9fa4"/><path d="M7 14h7" stroke="#555" stroke-width="1.500"/><path d="M1 1v4h4V1M3 5v9h4" fill="none" stroke="#555" stroke-width="1.300"/></svg>
      <svg class="ml-[8px] size-4" viewBox="0 0 16 16"><path d="M1.500 1v15" stroke="#555" stroke-width="1.500"/><path d="M2.500 2q3-1.500 6 0 3 1.200 6 0v7q-3 1.200-6 0-3-1.500-6 0Z" fill="#fff" stroke="#777"/><use href="#badx" x="6" y="6" width="10" height="10"/></svg>
      <span class="ml-[16px] pt-px tracking-[0.2px]">7:51 PM</span>
      <svg class="ml-auto mr-px w-4 h-[14px]" viewBox="0 0 16 14"><rect x=".5" y=".5" width="15" height="11" fill="url(#gMon)" stroke="#2a4f94"/><path d="M1 9q7-5 14-1" stroke="#78b4ff" fill="none"/><path d="M3 13h10" stroke="#6a7482" stroke-width="1.500"/></svg>
    </div>
  </footer>
</div>
</body>
</html>
